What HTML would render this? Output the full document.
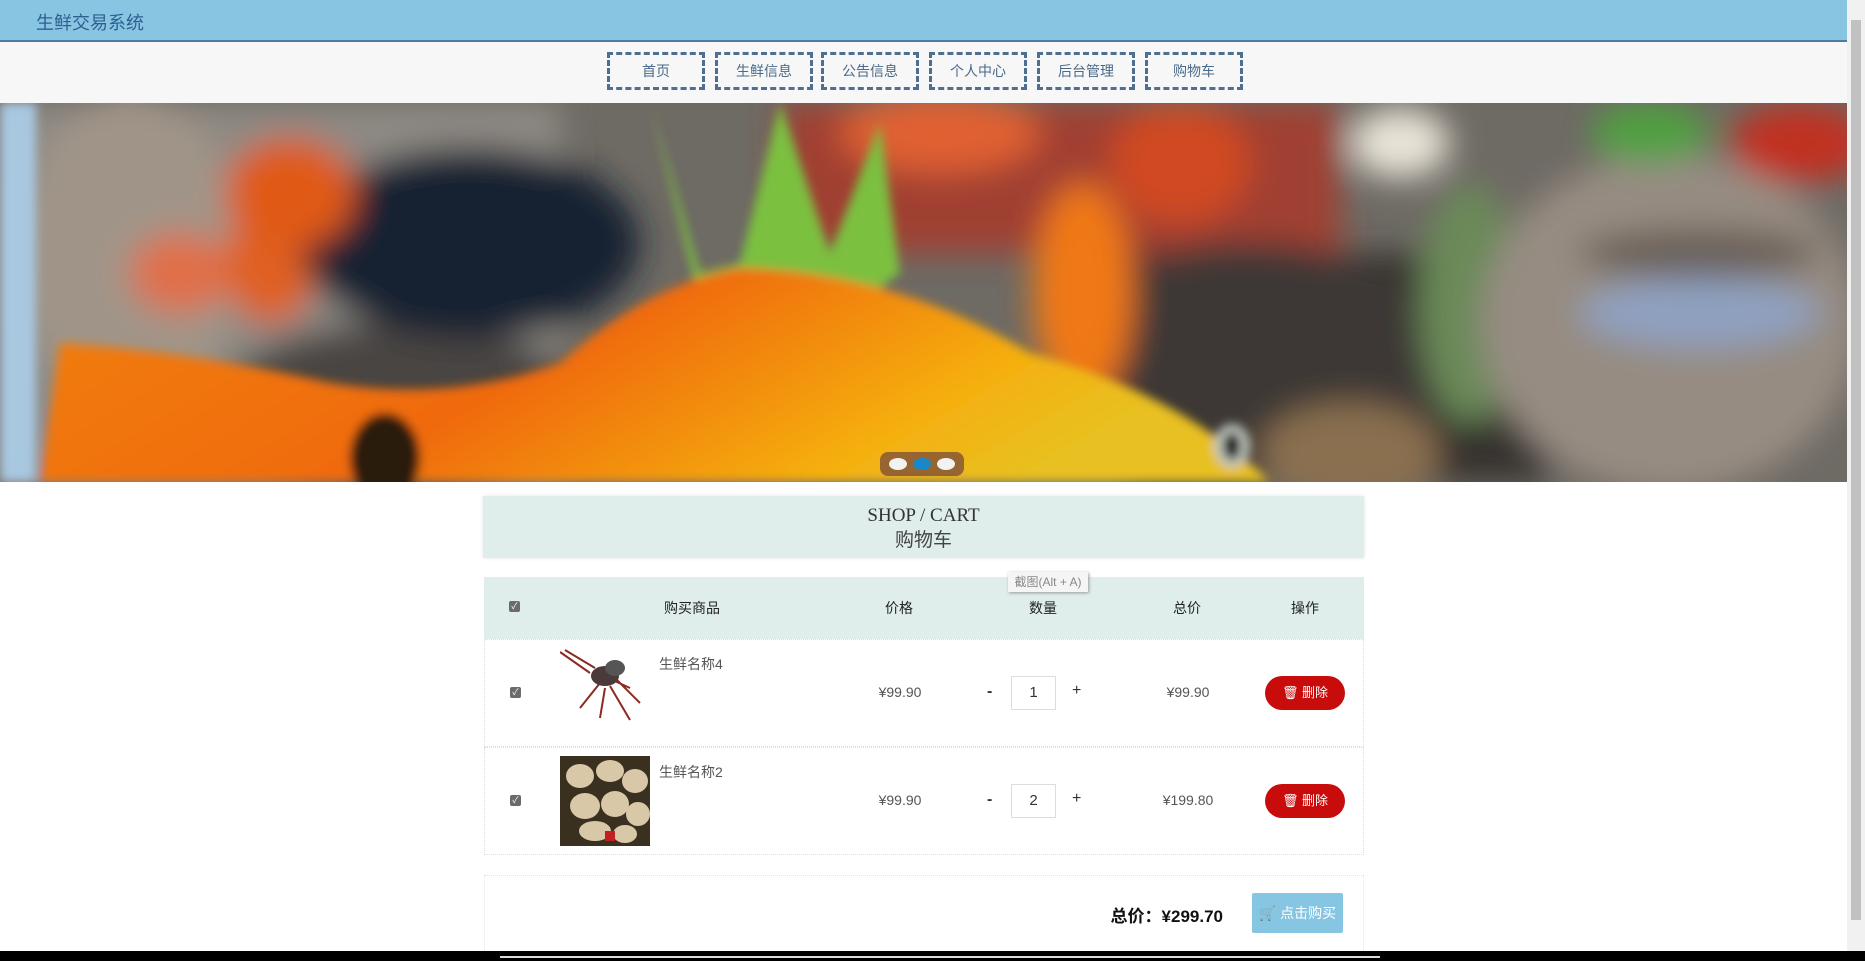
<!DOCTYPE html>
<html><head><meta charset="utf-8"><style>
*{margin:0;padding:0;box-sizing:border-box}
body{width:1865px;height:961px;overflow:hidden;background:#fff;font-family:"Liberation Sans","Noto Sans CJK SC",sans-serif;position:relative}
.hdr{position:absolute;left:0;top:0;width:1847px;height:42px;background:#87c5e3;border-bottom:2px solid #4e7aa0}
.hdr span{position:absolute;left:36px;top:9px;font-size:18px;color:#2e5f90}
.nav{position:absolute;left:0;top:42px;width:1847px;height:61px;background:#f7f7f7}
.nav a{position:absolute;top:10px;width:98px;height:38px;border:3px dashed #4f6f90;font-size:14px;color:#4a6a8a;text-align:center;line-height:32px;text-decoration:none}
.banner{position:absolute;left:0;top:103px;width:1847px;height:379px;overflow:hidden}
.sb{position:absolute;right:0;top:0;width:18px;height:951px;background:#f1f1f1}
.sb div{position:absolute;left:4px;top:20px;width:10px;height:900px;background:#c1c1c1}
.abs{position:absolute}
.title{left:483px;top:496px;width:881px;height:62px;background:#dfeeeb;box-shadow:0 0 4px #e5e5e5;text-align:center;font-family:"Liberation Serif","Noto Serif CJK SC",serif;color:#333;font-size:19px;line-height:23px;padding-top:8px}
.th{left:484px;top:577px;width:880px;height:62px;background:#dfeeeb;font-size:14px;color:#222}
.row{left:484px;width:880px;height:108px;border:1px dotted #ddd;font-size:14px;color:#555}
.c{position:absolute;transform:translateX(-50%)}
.cb{position:absolute;width:11px;height:11px;background:#6b6b6b;border-radius:2px;color:#fff;font-size:9px;line-height:11px;text-align:center}
.inp{position:absolute;width:45px;height:34px;border:1px solid #ddd;background:#fff;text-align:center;line-height:32px;color:#333;font-size:15px}
.del{position:absolute;width:80px;height:34px;border-radius:17px;background:#c80c0c;color:#fff;font-size:13px;line-height:34px;text-align:center}
</style></head><body>
<div class="hdr"><span>生鲜交易系统</span></div>
<div class="nav">
<a style="left:607px">首页</a><a style="left:715px">生鲜信息</a><a style="left:821px">公告信息</a><a style="left:929px">个人中心</a><a style="left:1037px">后台管理</a><a style="left:1145px">购物车</a>
</div>
<div class="banner">
<svg width="1847" height="379" viewBox="0 0 1847 379">
<defs>
<filter id="b1" x="-20%" y="-20%" width="140%" height="140%"><feGaussianBlur stdDeviation="16"/></filter>
<filter id="b2"><feGaussianBlur stdDeviation="5"/></filter>
<linearGradient id="og" x1="0" y1="0" x2="1" y2="0.3"><stop offset="0" stop-color="#f08010"/><stop offset="0.5" stop-color="#f06a10"/><stop offset="0.85" stop-color="#f5b010"/><stop offset="1" stop-color="#e8c020"/></linearGradient>
</defs>
<rect width="1847" height="379" fill="#6e6a64"/>
<g filter="url(#b1)">
<rect x="0" y="0" width="560" height="379" fill="#8e8a84"/>
<ellipse cx="130" cy="150" rx="110" ry="160" fill="#a09488"/>
<ellipse cx="180" cy="170" rx="50" ry="40" fill="#e0704a"/>
<ellipse cx="270" cy="160" rx="45" ry="60" fill="#e06020"/>
<rect x="780" y="0" width="560" height="150" fill="#a04030"/>
<ellipse cx="940" cy="30" rx="100" ry="40" fill="#e06030"/>
<ellipse cx="1180" cy="60" rx="70" ry="60" fill="#d04a20"/>
<ellipse cx="1400" cy="40" rx="50" ry="35" fill="#e8e4d8"/>
<rect x="1130" y="150" width="420" height="229" fill="#35302e"/>
<ellipse cx="1250" cy="260" rx="200" ry="120" fill="#3c3735"/>
<ellipse cx="1470" cy="200" rx="50" ry="120" fill="#6a8a58"/>
<ellipse cx="1670" cy="220" rx="190" ry="170" fill="#968c82"/>
<ellipse cx="1700" cy="210" rx="120" ry="35" fill="#8fa0c0"/>
<ellipse cx="1700" cy="150" rx="120" ry="25" fill="#6a6058"/>
<ellipse cx="1800" cy="40" rx="70" ry="40" fill="#c03020"/>
<ellipse cx="1650" cy="30" rx="60" ry="30" fill="#50a040"/>
<ellipse cx="400" cy="300" rx="180" ry="80" fill="#4a4542"/>
<ellipse cx="470" cy="140" rx="170" ry="95" fill="#182430"/>
<ellipse cx="290" cy="90" rx="65" ry="55" fill="#e05a18"/>
<ellipse cx="1083" cy="190" rx="50" ry="110" fill="#f07818"/>
<ellipse cx="1350" cy="350" rx="90" ry="50" fill="#8a7050"/>
</g>
<g filter="url(#b2)">
<path d="M650 0 L700 170 L740 160 L780 0 L830 150 L880 20 L900 170 L860 200 L700 200 Z" fill="#7cc040"/>
<path d="M60 240 Q200 250 330 280 Q450 300 560 260 Q650 180 740 165 Q900 170 1030 250 Q1180 290 1270 379 L40 379 Z" fill="url(#og)"/>
<ellipse cx="385" cy="355" rx="35" ry="45" fill="#2a1a10"/>
<ellipse cx="1232" cy="343" rx="18" ry="22" fill="#c0c8c0"/>
<ellipse cx="1232" cy="343" rx="9" ry="14" fill="#101010"/>
<rect x="0" y="0" width="36" height="379" fill="#a8c8e0"/>
</g>
<rect x="880" y="349" width="84" height="24" rx="8" fill="#7a4a38" opacity="0.75"/>
<ellipse cx="898" cy="361" rx="9" ry="6" fill="#f2f2f2"/>
<ellipse cx="922" cy="361" rx="9" ry="6" fill="#1a88c8"/>
<ellipse cx="946" cy="361" rx="9" ry="6" fill="#f2f2f2"/>
</svg>
</div>
<div class="sb"><div></div></div>

<div class="abs title">SHOP / CART<br><span style="font-family:'Noto Sans CJK SC',sans-serif;font-size:19px;color:#444">购物车</span></div>

<div class="abs th">
<div class="cb" style="left:25px;top:24px">✓</div>
<div class="c" style="left:208px;top:21px">购买商品</div>
<div class="c" style="left:415px;top:21px">价格</div>
<div class="c" style="left:559px;top:21px">数量</div>
<div class="c" style="left:703px;top:21px">总价</div>
<div class="c" style="left:821px;top:21px">操作</div>
</div>
<div class="abs" style="left:1008px;top:572px;width:80px;height:20px;background:#f5f5f5;box-shadow:1px 1px 3px #999;font-size:12px;color:#888;text-align:center;line-height:20px">截图(Alt + A)</div>

<div class="abs row" style="top:639px">
<div class="cb" style="left:25px;top:47px">✓</div>
<svg class="abs" style="left:75px;top:8px" width="90" height="75" viewBox="0 0 90 75"><g stroke="#8a2a20" stroke-width="2" fill="none"><path d="M0 4 L30 25 M5 2 L35 20 M40 35 L20 60 M45 40 L40 70 M50 38 L70 72 M55 30 L80 55 M48 30 L70 40"/></g><ellipse cx="45" cy="28" rx="14" ry="10" fill="#4a3a3a"/><ellipse cx="55" cy="20" rx="10" ry="8" fill="#555"/></svg>
<div class="abs" style="left:174px;top:14px">生鲜名称4</div>
<div class="c" style="left:415px;top:44px">¥99.90</div>
<div class="abs" style="left:502px;top:43px;font-size:16px;font-weight:bold;color:#333">-</div>
<div class="inp" style="left:526px;top:36px">1</div>
<div class="abs" style="left:587px;top:42px;font-size:16px;color:#333">+</div>
<div class="c" style="left:703px;top:44px">¥99.90</div>
<div class="del" style="left:780px;top:36px">🗑 删除</div>
</div>

<div class="abs row" style="top:747px">
<div class="cb" style="left:25px;top:47px">✓</div>
<svg class="abs" style="left:75px;top:8px" width="90" height="90" viewBox="0 0 90 90"><rect width="90" height="90" fill="#3a3020"/><g fill="#d8c8a8"><ellipse cx="20" cy="20" rx="14" ry="12"/><ellipse cx="50" cy="15" rx="14" ry="11"/><ellipse cx="75" cy="25" rx="13" ry="12"/><ellipse cx="25" cy="50" rx="15" ry="13"/><ellipse cx="55" cy="48" rx="14" ry="13"/><ellipse cx="78" cy="58" rx="12" ry="12"/><ellipse cx="35" cy="75" rx="16" ry="10"/><ellipse cx="65" cy="78" rx="12" ry="9"/></g><rect x="45" y="75" width="10" height="10" fill="#c02020"/></svg>
<div class="abs" style="left:174px;top:14px">生鲜名称2</div>
<div class="c" style="left:415px;top:44px">¥99.90</div>
<div class="abs" style="left:502px;top:43px;font-size:16px;font-weight:bold;color:#333">-</div>
<div class="inp" style="left:526px;top:36px">2</div>
<div class="abs" style="left:587px;top:42px;font-size:16px;color:#333">+</div>
<div class="c" style="left:703px;top:44px">¥199.80</div>
<div class="del" style="left:780px;top:36px">🗑 删除</div>
</div>

<div class="abs" style="left:484px;top:875px;width:880px;height:80px;border:1px dotted #e5e5e5">
<div class="abs" style="right:140px;top:26px;font-size:17px;font-weight:bold;color:#111">总价：¥299.70</div>
<div class="abs" style="left:767px;top:17px;width:91px;height:40px;background:#87c6e3;border-radius:2px;color:#fff;font-size:14px;line-height:40px;text-align:center">🛒 点击购买</div>
</div>

<div class="abs" style="left:0;top:951px;width:1865px;height:10px;background:#000"></div>
<div class="abs" style="left:500px;top:956px;width:880px;height:2px;background:#ddd"></div>
</body></html>
